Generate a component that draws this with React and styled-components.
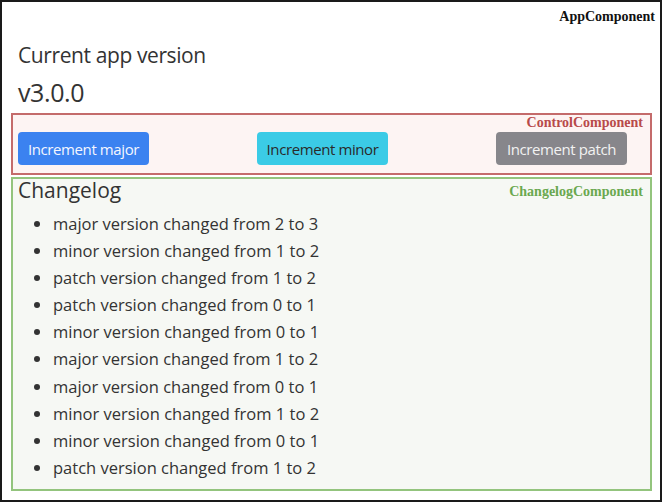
import React from 'react';
import styled, { createGlobalStyle } from 'styled-components';

const GlobalStyle = createGlobalStyle`
  html, body {
    margin: 0;
    padding: 0;
    background: #fff;
  }
  * {
    box-sizing: border-box;
  }
`;

const changes = [
  'major version changed from 2 to 3',
  'minor version changed from 1 to 2',
  'patch version changed from 1 to 2',
  'patch version changed from 0 to 1',
  'minor version changed from 0 to 1',
  'major version changed from 1 to 2',
  'major version changed from 0 to 1',
  'minor version changed from 1 to 2',
  'minor version changed from 0 to 1',
  'patch version changed from 1 to 2',
];

const App = () => {
  return (
    <>
      <GlobalStyle />
      <AppFrame>
        <Label color='#111' top={7} right={5}>AppComponent</Label>
        <Title>Current app version</Title>
        <Version>v3.0.0</Version>

        {/* Control panel */}
        <Panel border='#c46b6b' bg='#fdf4f3'>
          <Label color='#b84a4a' top={0} right={7}>ControlComponent</Label>
          <Controls>
            <Button bg='#3b82f0' fg='#f4f6ff'>Increment major</Button>
            <Button bg='#3bcbe6' fg='#2a2a2a'>Increment minor</Button>
            <Button bg='#87868b' fg='#f2f2f2'>Increment patch</Button>
          </Controls>
        </Panel>

        {/* Changelog panel */}
        <Panel border='#93c47d' bg='#f6f8f4' grow>
          <Label color='#6aa84f' top={5} right={7}>ChangelogComponent</Label>
          <Heading>Changelog</Heading>
          <List>
            {changes.map((c, i) => (
              <li key={i}>{c}</li>
            ))}
          </List>
        </Panel>
      </AppFrame>
    </>
  );
};

export default App;

// Styled Components Area
const AppFrame = styled.div`
  position: relative;
  width: 662px;
  height: 502px;
  border: 2px solid #1a1a1a;
  padding: 0 8px 9px 9px;
  display: flex;
  flex-direction: column;
  font-family: 'Open Sans', 'Noto Sans', sans-serif;
  color: #333;
`;

const Label = styled.div`
  position: absolute;
  top: ${(p) => p.top}px;
  right: ${(p) => p.right}px;
  font-family: 'Liberation Serif', 'Times New Roman', serif;
  font-weight: bold;
  font-size: 14px;
  line-height: 16px;
  color: ${(p) => p.color};
`;

const Title = styled.div`
  margin: 39px 0 0 7px;
  font-size: 21px;
  line-height: 28px;
  letter-spacing: -0.4px;
`;

const Version = styled.div`
  margin: 8px 0 0 7px;
  font-size: 25px;
  line-height: 30px;
  letter-spacing: -0.4px;
`;

const Panel = styled.div`
  position: relative;
  margin-top: ${(p) => (p.grow ? '2px' : '6px')};
  border: 2px solid ${(p) => p.border};
  background: ${(p) => p.bg};
  flex: ${(p) => (p.grow ? '1' : 'none')};
`;

const Controls = styled.div`
  display: flex;
  justify-content: space-between;
  padding: 17px 23px 8px 5px;
`;

const Button = styled.button`
  width: 131px;
  height: 33px;
  border: none;
  border-radius: 4px;
  background: ${(p) => p.bg};
  color: ${(p) => p.fg};
  font-family: 'Open Sans', 'Noto Sans', sans-serif;
  font-size: 15px;
  letter-spacing: -0.4px;
  padding: 0;
`;

const Heading = styled.div`
  margin-left: 5px;
  font-size: 21px;
  line-height: 22px;
`;

const List = styled.ul`
  margin: 9px 0 0;
  padding-left: 40px;
  font-size: 16.5px;
  line-height: 27.1px;
`;
